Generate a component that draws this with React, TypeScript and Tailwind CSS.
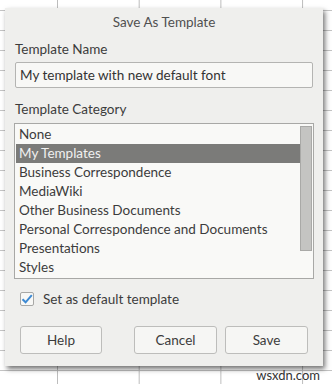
import React from 'react';

const categories = [
  'None',
  'My Templates',
  'Business Correspondence',
  'MediaWiki',
  'Other Business Documents',
  'Personal Correspondence and Documents',
  'Presentations',
  'Styles',
];

const font = { fontFamily: 'Lato, "Noto Sans", sans-serif' };

export default function App() {
  return (
    <div
      className="relative w-[332px] h-[384px] overflow-hidden bg-white bg-[linear-gradient(to_right,#bdbdbd_1px,transparent_1px),linear-gradient(to_bottom,#c4c4c4_1px,transparent_1px)] bg-[size:81.7px_20px] bg-[position:57px_10px] pt-[8px] pl-[5px]"
      style={font}
    >
      <div className="w-[318px] h-[358px] bg-[#efefed] shadow-[2px_3px_5px_rgba(0,0,0,0.55)] flex flex-col text-[13.5px] text-[#3c3c3c]">
        <div className="h-[28px] flex items-center justify-center pt-[1px] text-[#505050]">Save As Template</div>

        <div className="px-[10px] flex flex-col">
          <div className="h-[26px] flex items-center">Template Name</div>
          <div className="h-[26px] border border-[#b4b4b2] rounded-[2px] bg-[#f8f8f6] flex items-center px-[4px] text-[#333]">
            My template with new default font
          </div>

          <div className="h-[27px] flex items-end pb-[3px] mt-[7px]">Template Category</div>
          <div className="mt-[1px] h-[156px] w-[300px] -ml-[1px] border border-[#a8a8a6] bg-[#f9f9f7] p-[1px] flex">
            <div className="flex-1 flex flex-col overflow-hidden">
              {categories.map((c, i) => (
                <div
                  key={c}
                  className={
                    'h-[19px] shrink-0 flex items-center pl-[3px] whitespace-nowrap ' +
                    (i === 1 ? 'bg-[#7b7b79] text-[#f0f0f0]' : 'text-[#3c3c3c]')
                  }
                >
                  {c}
                </div>
              ))}
            </div>
            <div className="w-[12px] flex flex-col mt-[1px]">
              <div className="h-[125px] bg-[#c4c4c2] border border-[#a9a9a7]" />
            </div>
          </div>
        </div>

        <div className="flex items-center gap-[9px] pl-[15px] mt-[12px] h-[16px]">
          <div className="w-[14px] h-[14px] border border-[#a8a8a6] bg-[#f8f8f6] rounded-[2px] flex items-center justify-center">
            <svg width="12" height="12" viewBox="0 0 12 12">
              <path d="M1.5 6.2 L4.6 9.3 L10.8 2.2" fill="none" stroke="#3d8ad3" strokeWidth="2" />
            </svg>
          </div>
          <span>Set as default template</span>
        </div>

        <div className="flex px-[15px] mt-[19px]">
          <button className="w-[82px] h-[28px] border border-[#bdbdbb] rounded-[3px] bg-[#f6f6f4] text-[#3c3c3c]">Help</button>
          <div className="flex-1" />
          <button className="w-[83px] h-[28px] border border-[#bdbdbb] rounded-[3px] bg-[#f6f6f4] text-[#3c3c3c]">Cancel</button>
          <button className="ml-[8px] w-[83px] h-[28px] border border-[#bdbdbb] rounded-[3px] bg-[#f6f6f4] text-[#3c3c3c]">Save</button>
        </div>
      </div>
      <div className="absolute right-[12px] bottom-[2px] text-[13px] text-[#333] leading-none" style={font}>wsxdn.com</div>
    </div>
  );
}
